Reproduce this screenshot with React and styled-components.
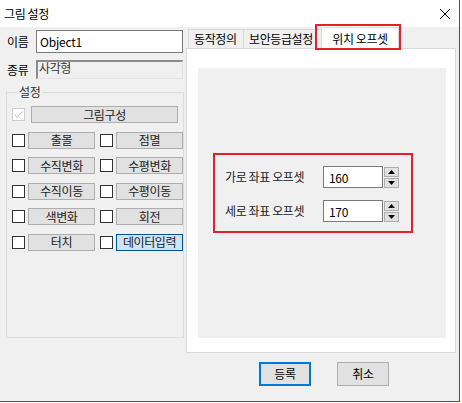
import React from 'react';
import styled, { createGlobalStyle } from 'styled-components';

const GlobalStyle = createGlobalStyle`
    html, body {
        margin: 0;
        padding: 0;
        background: #ffffff;
    }
    * {
        box-sizing: border-box;
    }
`;

const FONT = `"Noto Sans CJK KR", "Noto Sans", sans-serif`;

const Window = styled.div`
    width: 460px;
    height: 402px;
    display: flex;
    flex-direction: column;
    border-right: 1px solid #2b5797;
    border-bottom: 1px solid #2b5797;
    font-family: ${FONT};
    font-size: 12px;
    letter-spacing: -0.4px;
    color: #000;
`;

const TitleBar = styled.div`
    height: 27px;
    flex: none;
    background: #ffffff;
    display: flex;
    align-items: center;
    justify-content: space-between;
    padding: 0 8px 0 4px;
`;

const Title = styled.span`
    line-height: 14px;
`;

const Body = styled.div`
    flex: 1;
    background: #f0f0f0;
    display: flex;
    flex-direction: column;
`;

const Main = styled.div`
    display: flex;
    gap: 2px;
    padding-left: 6px;
    padding-right: 2px;
`;

const LeftCol = styled.div`
    width: 178px;
    display: flex;
    flex-direction: column;
    padding-top: 3px;
`;

const FieldRow = styled.div`
    display: flex;
    align-items: center;
    margin-top: ${({ $top }) => $top || 0}px;
`;

const FieldLabel = styled.span`
    width: 30px;
    padding-left: 1px;
    line-height: 14px;
`;

const TextBox = styled.div`
    width: 147px;
    height: 23px;
    background: #ffffff;
    border: 1px solid #7a7a7a;
    padding: 0 3px;
    display: flex;
    align-items: center;
    letter-spacing: -0.2px;
`;

const ReadOnlyBox = styled.div`
    width: 147px;
    height: 19px;
    background: #f0f0f0;
    border-top: 2px solid #8a8a8a;
    border-left: 2px solid #8a8a8a;
    border-right: 1px solid #e3e3e3;
    border-bottom: 1px solid #e3e3e3;
    padding: 0 0 0 1px;
    line-height: 12px;
    color: #333;
`;

const GroupBox = styled.fieldset`
    flex: 1;
    margin: 6px 0 15px 0;
    padding: 7px 0 0 5px;
    border: 1px solid #dcdcdc;
    display: flex;
    flex-direction: column;
    gap: 8.5px;
    min-width: 0;
`;

const Legend = styled.legend`
    margin-left: 5px;
    padding: 0 2px;
    line-height: 14px;
    color: #333;
`;

const CheckRow = styled.div`
    display: flex;
    align-items: center;
    height: 17px;
`;

const CheckBox = styled.span`
    width: 13px;
    height: 13px;
    flex: none;
    border: 1px solid ${({ $disabled }) => ($disabled ? '#cccccc' : '#333333')};
    background: #ffffff;
    display: flex;
    align-items: center;
    justify-content: center;
`;

const OptionButton = styled.div`
    height: 17px;
    width: ${({ $wide }) => ($wide ? '147px' : '67px')};
    margin-left: ${({ $wide }) => ($wide ? '6px' : '3px')};
    margin-right: ${({ $left }) => ($left ? '5px' : '0')};
    background: ${({ $active }) => ($active ? '#cce4f7' : '#e1e1e1')};
    border: 1px solid ${({ $active }) => ($active ? '#005499' : '#adadad')};
    display: flex;
    align-items: center;
    justify-content: center;
    line-height: 14px;
    color: #222;
`;

const RightCol = styled.div`
    flex: 1;
    display: flex;
    flex-direction: column;
    margin-right: 1px;
`;

const TabStrip = styled.div`
    height: 21px;
    display: flex;
    align-items: flex-end;
    padding-left: 2px;
    position: relative;
    z-index: 1;
`;

const Tab = styled.div`
    height: ${({ $selected }) => ($selected ? '23px' : '19px')};
    margin-bottom: ${({ $selected }) => ($selected ? '-2px' : '0')};
    margin-left: ${({ $selected, $first }) => ($selected ? '-2px' : $first ? '0' : '-1px')};
    width: ${({ $w }) => $w}px;
    background: ${({ $selected }) => ($selected ? '#ffffff' : '#f0f0f0')};
    border: 1px solid #d9d9d9;
    border-bottom: none;
    padding: ${({ $selected }) => ($selected ? '4px 0 0 0' : '2px 0 0 5px')};
    text-align: ${({ $selected }) => ($selected ? 'center' : 'left')};
    white-space: nowrap;
    line-height: 14px;
    position: relative;
    z-index: ${({ $selected }) => ($selected ? 2 : 0)};

    ${({ $marked }) => $marked && `
        &::after {
            content: '';
            position: absolute;
            left: -7px;
            right: -3px;
            top: -4px;
            bottom: 0px;
            border: 2px solid #e3202b;
        }
    `}
`;

const TabPanel = styled.div`
    height: 305px;
    background: #ffffff;
    border: 1px solid #d9d9d9;
    padding: 19px 9px 14px 11px;
    display: flex;
`;

const PanelInner = styled.div`
    flex: 1;
    background: #f0f0f0;
    padding: 85px 0 0 15px;
`;

const OffsetBox = styled.div`
    width: 200px;
    height: 80px;
    border: 2px solid #e3202b;
    padding: 11px 0 0 10px;
    display: flex;
    flex-direction: column;
    gap: 12px;
`;

const OffsetRow = styled.div`
    display: flex;
    align-items: center;
`;

const OffsetLabel = styled.span`
    width: 98px;
    line-height: 14px;
    color: #222;
`;

const NumberBox = styled.div`
    width: 60px;
    height: 22px;
    background: #ffffff;
    border: 1px solid #7a7a7a;
    padding: 0 5px;
    display: flex;
    align-items: center;
    letter-spacing: -0.3px;
`;

const Spin = styled.div`
    display: flex;
    flex-direction: column;
    gap: 1px;
    margin-left: 1px;
`;

const SpinButton = styled.div`
    width: 15px;
    height: 10px;
    background: #e1e1e1;
    border: 1px solid #adadad;
    display: flex;
    align-items: center;
    justify-content: center;
`;

const Footer = styled.div`
    display: flex;
    justify-content: flex-end;
    gap: 26px;
    padding-right: 70px;
    margin-top: 9px;
`;

const DialogButton = styled.div`
    width: 52px;
    height: 24px;
    background: #e1e1e1;
    border: ${({ $default }) => ($default ? '2px solid #0078d7' : '1px solid #adadad')};
    display: flex;
    align-items: center;
    justify-content: center;
    line-height: 14px;
`;

const CloseIcon = () => (
    <svg width="12" height="12" viewBox="0 0 12 12">
        <path d="M1 1 L11 11 M11 1 L1 11" stroke="#000" strokeWidth="1" />
    </svg>
);

const CheckMark = () => (
    <svg width="11" height="11" viewBox="0 0 11 11">
        <path d="M1.5 5.5 L4.2 8.2 L9.5 2.5" stroke="#b8b8b8" strokeWidth="1" fill="none" />
    </svg>
);

const Arrow = ({ up }) => (
    <svg width="7" height="4" viewBox="0 0 7 4">
        <path d={up ? 'M0 4 L3.5 0 L7 4 Z' : 'M0 0 L3.5 4 L7 0 Z'} fill="#000" />
    </svg>
);

const options = [
    ['출몰', '점멸'],
    ['수직변화', '수평변화'],
    ['수직이동', '수평이동'],
    ['색변화', '회전'],
    ['터치', '데이터입력'],
];

const offsets = [
    { label: '가로 좌표 오프셋', value: '160' },
    { label: '세로 좌표 오프셋', value: '170' },
];

export default function App() {
    return (
        <>
            <GlobalStyle />
            <Window>
                <TitleBar>
                    <Title>그림 설정</Title>
                    <CloseIcon />
                </TitleBar>
                <Body>
                    <Main>
                        <LeftCol>
                            <FieldRow>
                                <FieldLabel>이름</FieldLabel>
                                <TextBox>Object1</TextBox>
                            </FieldRow>
                            <FieldRow $top={7}>
                                <FieldLabel>종류</FieldLabel>
                                <ReadOnlyBox>사각형</ReadOnlyBox>
                            </FieldRow>
                            <GroupBox>
                                <Legend>설정</Legend>
                                <CheckRow>
                                    <CheckBox $disabled><CheckMark /></CheckBox>
                                    <OptionButton $wide>그림구성</OptionButton>
                                </CheckRow>
                                {options.map(([a, b]) => (
                                    <CheckRow key={a}>
                                        <CheckBox />
                                        <OptionButton $left>{a}</OptionButton>
                                        <CheckBox />
                                        <OptionButton $active={b === '데이터입력'}>{b}</OptionButton>
                                    </CheckRow>
                                ))}
                            </GroupBox>
                        </LeftCol>
                        <RightCol>
                            <TabStrip>
                                <Tab $first $w={56}>동작정의</Tab>
                                <Tab $w={80}>보안등급설정</Tab>
                                <Tab $selected $marked $w={78}>위치 오프셋</Tab>
                            </TabStrip>
                            <TabPanel>
                                <PanelInner>
                                    <OffsetBox>
                                        {offsets.map((o) => (
                                            <OffsetRow key={o.label}>
                                                <OffsetLabel>{o.label}</OffsetLabel>
                                                <NumberBox>{o.value}</NumberBox>
                                                <Spin>
                                                    <SpinButton><Arrow up /></SpinButton>
                                                    <SpinButton><Arrow /></SpinButton>
                                                </Spin>
                                            </OffsetRow>
                                        ))}
                                    </OffsetBox>
                                </PanelInner>
                            </TabPanel>
                        </RightCol>
                    </Main>
                    <Footer>
                        <DialogButton $default>등록</DialogButton>
                        <DialogButton>취소</DialogButton>
                    </Footer>
                </Body>
            </Window>
        </>
    );
}
